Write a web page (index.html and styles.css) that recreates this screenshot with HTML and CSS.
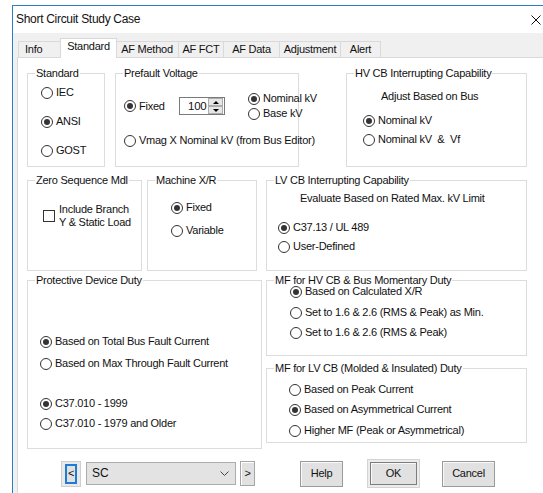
FILE: index.html
```html
<!DOCTYPE html>
<html>
<head>
<meta charset="utf-8">
<title>Short Circuit Study Case</title>
<link rel="stylesheet" href="styles.css">
</head>
<body>
<div class="window">
  <div class="titlebar">
    <span class="title">Short Circuit Study Case</span>
    <svg class="close" width="10" height="10" viewBox="0 0 10 10"><path d="M0.5 0.5L9.5 9.5M9.5 0.5L0.5 9.5" stroke="#111" stroke-width="1" fill="none"/></svg>
  </div>
  <div class="client">
    <div class="tabstrip">
      <div class="tab t-info">Info</div>
      <div class="tab t-standard active">Standard</div>
      <div class="tab t-method">AF Method</div>
      <div class="tab t-fct">AF FCT</div>
      <div class="tab t-data">AF Data</div>
      <div class="tab t-adj">Adjustment</div>
      <div class="tab t-alert">Alert</div>
    </div>
    <div class="panel">
      <div class="row row-1">
        <div class="group g-standard">
          <div class="group-title">Standard</div>
          <div class="body">
            <div class="radio"><span class="circle"></span>IEC</div>
            <div class="radio"><span class="circle on"></span>ANSI</div>
            <div class="radio"><span class="circle"></span>GOST</div>
          </div>
        </div>
        <div class="group g-prefault">
          <div class="group-title">Prefault Voltage</div>
          <div class="body">
            <div class="prefault-top">
              <div class="radio r-fixed"><span class="circle on"></span>Fixed</div>
              <div class="spin">
                <span class="spin-value">100</span>
                <span class="spin-btns">
                  <span class="spin-btn"><span class="tri-up"></span></span>
                  <span class="spin-btn"><span class="tri-down"></span></span>
                </span>
              </div>
              <div class="kv-choice">
                <div class="radio"><span class="circle on"></span>Nominal kV</div>
                <div class="radio"><span class="circle"></span>Base kV</div>
              </div>
            </div>
            <div class="radio r-vmag"><span class="circle"></span>Vmag X Nominal kV (from Bus Editor)</div>
          </div>
        </div>
        <div class="group g-hvcb">
          <div class="group-title">HV CB Interrupting Capability</div>
          <div class="body">
            <div class="note">Adjust Based on Bus</div>
            <div class="radio"><span class="circle on"></span>Nominal kV</div>
            <div class="radio"><span class="circle"></span>Nominal kV&nbsp;&nbsp;&amp;&nbsp;&nbsp;Vf</div>
          </div>
        </div>
      </div>

      <div class="row row-2">
        <div class="group g-zero">
          <div class="group-title">Zero Sequence Mdl</div>
          <div class="body">
            <div class="check"><span class="box"></span><span class="check-label">Include Branch<br>Y &amp; Static Load</span></div>
          </div>
        </div>
        <div class="group g-machine">
          <div class="group-title">Machine X/R</div>
          <div class="body">
            <div class="radio"><span class="circle on"></span>Fixed</div>
            <div class="radio"><span class="circle"></span>Variable</div>
          </div>
        </div>
        <div class="group g-lvcb">
          <div class="group-title">LV CB Interrupting Capability</div>
          <div class="body">
            <div class="note">Evaluate Based on Rated Max. kV Limit</div>
            <div class="radio"><span class="circle on"></span>C37.13 / UL 489</div>
            <div class="radio"><span class="circle"></span>User-Defined</div>
          </div>
        </div>
      </div>

      <div class="row row-3">
        <div class="group g-protective">
          <div class="group-title">Protective Device Duty</div>
          <div class="body">
            <div class="radio"><span class="circle on"></span>Based on Total Bus Fault Current</div>
            <div class="radio"><span class="circle"></span>Based on Max Through Fault Current</div>
            <div class="radio r-std"><span class="circle on"></span>C37.010 - 1999</div>
            <div class="radio"><span class="circle"></span>C37.010 - 1979 and Older</div>
          </div>
        </div>
        <div class="col-right">
          <div class="group g-mfhv">
            <div class="group-title">MF for HV CB &amp; Bus Momentary Duty</div>
            <div class="body">
              <div class="radio"><span class="circle on"></span>Based on Calculated X/R</div>
              <div class="radio"><span class="circle"></span>Set to 1.6 &amp; 2.6 (RMS &amp; Peak) as Min.</div>
              <div class="radio"><span class="circle"></span>Set to 1.6 &amp; 2.6 (RMS &amp; Peak)</div>
            </div>
          </div>
          <div class="group g-mflv">
            <div class="group-title">MF for LV CB (Molded &amp; Insulated) Duty</div>
            <div class="body">
              <div class="radio"><span class="circle"></span>Based on Peak Current</div>
              <div class="radio"><span class="circle on"></span>Based on Asymmetrical Current</div>
              <div class="radio"><span class="circle"></span>Higher MF (Peak or Asymmetrical)</div>
            </div>
          </div>
        </div>
      </div>

      <div class="footer">
        <div class="nav-prev"><span class="nav-prev-face">&lt;</span></div>
        <div class="combo"><span class="combo-text">SC</span>
          <svg class="combo-arrow" width="9" height="5" viewBox="0 0 9 5"><path d="M0.5 0.5L4.5 4.5L8.5 0.5" stroke="#444" stroke-width="1" fill="none"/></svg>
        </div>
        <div class="nav-next">&gt;</div>
        <div class="btn b-help">Help</div>
        <div class="btn-default"><div class="btn b-ok">OK</div></div>
        <div class="btn b-cancel">Cancel</div>
      </div>
    </div>
  </div>
</div>
</body>
</html>
```

FILE: styles.css
```css
html, body {
  margin: 0;
  padding: 0;
  background: #ffffff;
  overflow: hidden;
}

body {
  font-family: "Liberation Sans", Arial, sans-serif;
  font-size: 11px;
  line-height: 13px;
  letter-spacing: -0.25px;
  color: #111;
}

.window {
  margin: 5px 0 0 12px;
  width: 531px;
  height: 490px;
  border-top: 1px solid #2a7fc4;
  border-left: 1px solid #2a7fc4;
  background: #f0f0f0;
  overflow: hidden;
}

/* title bar */
.titlebar {
  height: 27px;
  background: #ffffff;
  display: flex;
  align-items: center;
  justify-content: space-between;
  padding-left: 3px;
}
.title {
  font-size: 12px;
  letter-spacing: -0.3px;
}
.close {
  margin-right: 3px;
  display: block;
}

/* tab control */
.client {
  padding-left: 4px;
}
.tabstrip {
  display: flex;
  align-items: flex-end;
  height: 19px;
  margin-top: 5px;
  margin-left: 1px;
}
.tab {
  box-sizing: border-box;
  height: 16px;
  border-top: 1px solid #d9d9d9;
  border-left: 1px solid #d9d9d9;
  background: #f0f0f0;
  text-align: center;
  line-height: 15px;
  white-space: nowrap;
}
.tab.active {
  position: relative;
  z-index: 1;
  height: 20px;
  margin: 0 -2px -1px -2px;
  border-right: 1px solid #d9d9d9;
  background: #ffffff;
  line-height: 15px;
}
.t-info { width: 44px; text-align: left; padding-left: 6px; }
.t-standard { width: 57px; }
.t-method { width: 63px; }
.t-fct { width: 45px; }
.t-data { width: 56px; }
.t-adj { width: 61px; }
.t-alert { width: 41px; border-right: 1px solid #d9d9d9; }

.panel {
  width: 540px;
  height: 440px;
  border: 1px solid #d9d9d9;
  background: #ffffff;
  padding: 15px 0 0 9px;
  box-sizing: border-box;
}

/* group boxes */
.row {
  display: flex;
  align-items: flex-start;
}
.row-2 { margin-top: 13px; }
.row-3 { margin-top: 9px; }

.group {
  box-sizing: border-box;
  border: 1px solid #dcdcdc;
  flex: none;
}
.group-title {
  display: table;
  height: 13px;
  margin: -7px 0 0 7px;
  padding: 0 1px;
  background: #ffffff;
  white-space: nowrap;
}
.body {
  display: flex;
  flex-direction: column;
  align-items: flex-start;
}

.g-standard { width: 78px; height: 94px; }
.g-standard .body { padding: 6px 0 0 13px; gap: 16px; }

.g-prefault { width: 184px; height: 94px; margin-left: 10px; }
.g-prefault .body { padding: 12px 0 0 8px; }
.prefault-top {
  display: flex;
  align-items: center;
}
.r-fixed { width: 55px; }
.kv-choice {
  display: flex;
  flex-direction: column;
  gap: 2px;
  margin-left: 23px;
}
.r-vmag { margin-top: 14px; }

.g-hvcb { width: 181px; height: 94px; margin-left: 47px; }
.g-hvcb .body { padding: 10px 0 0 16px; }
.g-hvcb .note { margin-left: 18px; }
.g-hvcb .note + .radio { margin-top: 11px; }
.g-hvcb .radio + .radio { margin-top: 6px; }

.g-zero { width: 115px; height: 91px; }
.g-zero .body { padding: 16px 0 0 15px; }

.g-machine { width: 110px; height: 91px; margin-left: 5px; }
.g-machine .body { padding: 14px 0 0 23px; gap: 10px; }

.g-lvcb { width: 261px; height: 91px; margin-left: 9px; }
.g-lvcb .body { padding: 5px 0 0 11px; }
.g-lvcb .note { margin-left: 22px; }
.g-lvcb .note + .radio { margin-top: 16px; }
.g-lvcb .radio + .radio { margin-top: 6px; }

.g-protective { width: 235px; height: 169px; }
.g-protective .body { padding: 48px 0 0 12px; }
.g-protective .radio + .radio { margin-top: 9px; }
.g-protective .radio.r-std { margin-top: 27px; }
.g-protective .r-std + .radio { margin-top: 7px; }

.col-right {
  margin-left: 4px;
  width: 261px;
  display: flex;
  flex-direction: column;
}
.g-mfhv { width: 261px; height: 76px; }
.g-mfhv .body { padding: 0 0 0 23px; margin-top: -2px; }
.g-mfhv .radio:nth-child(2) { margin-top: 8px; }
.g-mfhv .radio:nth-child(3) { margin-top: 7px; }

.g-mflv { width: 261px; height: 75px; margin-top: 12px; }
.g-mflv .body { padding: 8px 0 0 22px; }
.g-mflv .radio:nth-child(2) { margin-top: 7px; }
.g-mflv .radio:nth-child(3) { margin-top: 8px; }

/* radio buttons */
.radio {
  display: flex;
  align-items: center;
  height: 13px;
  white-space: nowrap;
}
.circle {
  flex: none;
  box-sizing: border-box;
  width: 12px;
  height: 12px;
  margin-right: 3px;
  border: 1px solid #333333;
  border-radius: 50%;
  background: #ffffff;
  display: flex;
  align-items: center;
  justify-content: center;
}
.circle.on::after {
  content: "";
  width: 6px;
  height: 6px;
  border-radius: 50%;
  background: #333333;
}

/* check box */
.check {
  display: flex;
  align-items: center;
}
.box {
  flex: none;
  box-sizing: border-box;
  width: 12px;
  height: 12px;
  border: 1px solid #333333;
  background: #ffffff;
  margin-right: 4px;
}
.check-label { white-space: nowrap; }

/* numeric spinner */
.spin {
  box-sizing: border-box;
  width: 46px;
  height: 18px;
  border: 1px solid #7a7a7a;
  background: #ffffff;
  display: flex;
  align-items: center;
  justify-content: space-between;
  padding: 0 1px 0 8px;
}
.spin-value { font-size: 11.5px; }
.spin-btns {
  display: flex;
  flex-direction: column;
}
.spin-btn {
  box-sizing: border-box;
  width: 15px;
  height: 8px;
  border: 1px solid #adadad;
  background: #e6e6e6;
  display: flex;
  align-items: center;
  justify-content: center;
}
.tri-up, .tri-down {
  width: 0;
  height: 0;
  border-left: 3px solid transparent;
  border-right: 3px solid transparent;
}
.tri-up { border-bottom: 3px solid #000; }
.tri-down { border-top: 3px solid #000; }

/* bottom buttons */
.footer {
  display: flex;
  align-items: center;
  height: 29px;
  margin-top: 10px;
  padding-left: 34px;
}
.nav-prev {
  box-sizing: border-box;
  width: 20px;
  height: 26px;
  border: 1px solid #cfcfcf;
  background: #e9e9e9;
  padding: 2px 3px;
}
.nav-prev-face {
  box-sizing: border-box;
  display: flex;
  align-items: center;
  justify-content: center;
  width: 12px;
  height: 20px;
  border: 2px solid #1f7bd4;
  background: #e1e1e1;
  font-size: 11px;
}
.combo {
  box-sizing: border-box;
  width: 150px;
  height: 23px;
  margin-left: 5px;
  border: 1px solid #acacac;
  background: #e3e3e3;
  display: flex;
  align-items: center;
  justify-content: space-between;
  padding: 0 6px 0 5px;
}
.combo-text {
  font-size: 12px;
  letter-spacing: 0;
}
.combo-arrow { display: block; }
.nav-next {
  box-sizing: border-box;
  width: 15px;
  height: 25px;
  margin-left: 4px;
  border: 1px solid #a6a6a6;
  box-shadow: inset 1px 1px #ffffff;
  background: #e1e1e1;
  display: flex;
  align-items: center;
  justify-content: center;
}
.btn {
  box-sizing: border-box;
  height: 26px;
  border: 1px solid #9a9a9a;
  box-shadow: inset 1px 1px #f8f8f8;
  background: #e1e1e1;
  display: flex;
  align-items: center;
  justify-content: center;
}
.b-help { width: 43px; margin-left: 45px; }
.btn-default {
  box-sizing: border-box;
  width: 53px;
  height: 29px;
  margin-left: 24px;
  border: 1px solid #d4d4d4;
  background: #ececec;
  padding: 2px;
}
.b-ok {
  width: 100%;
  height: 100%;
  border-color: #7d7d7d;
}
.b-cancel { width: 53px; margin-left: 22px; }
```
